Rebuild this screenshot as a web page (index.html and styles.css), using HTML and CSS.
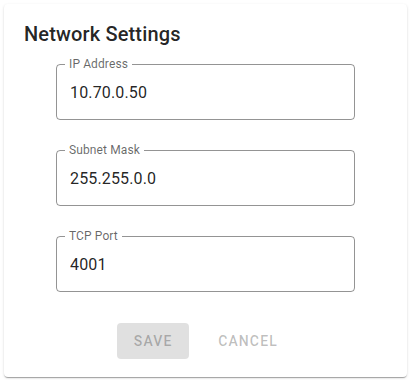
FILE: index.html
```html
<!DOCTYPE html>
<html lang="en">
<head>
  <meta charset="UTF-8" />
  <meta name="viewport" content="width=device-width, initial-scale=1.0" />
  <title>Network Settings</title>
  <link rel="stylesheet" href="styles.css">
</head>
<body>
  <div class="card">
    <h2>Network Settings</h2>

    <form class="settings">
      <div class="field">
        <input type="text" value="10.70.0.50">
        <fieldset><legend>IP Address</legend></fieldset>
      </div>
      <div class="field">
        <input type="text" value="255.255.0.0">
        <fieldset><legend>Subnet Mask</legend></fieldset>
      </div>
      <div class="field">
        <input type="text" value="4001">
        <fieldset><legend>TCP Port</legend></fieldset>
      </div>

      <div class="actions">
        <button type="button" class="save" disabled>Save</button>
        <button type="button" class="cancel" disabled>Cancel</button>
      </div>
    </form>
  </div>
</body>
</html>
```

FILE: styles.css
```css
* {
  box-sizing: border-box;
}

body, html {
  margin: 0;
  padding: 0;
  font-family: Roboto, 'Liberation Sans', sans-serif;
  background: #fff;
}

body {
  padding: 4px;
}

.card {
  width: 403px;
  height: 373px;
  background: #fff;
  border-radius: 4px;
  box-shadow: 0 2px 1px -1px rgba(0,0,0,0.2), 0 1px 1px 0 rgba(0,0,0,0.14), 0 1px 3px 0 rgba(0,0,0,0.12);
  padding: 14px 20px;
}

.card h2 {
  margin: 0;
  font-size: 20px;
  line-height: 32px;
  font-weight: 500;
  color: rgba(0,0,0,0.87);
  letter-spacing: 0.0075em;
}

.settings {
  display: flex;
  flex-direction: column;
  align-items: center;
  gap: 30px;
  margin-top: 14px;
}

.field {
  position: relative;
  width: 299px;
  height: 56px;
}

.field input {
  width: 100%;
  height: 100%;
  border: none;
  outline: none;
  background: transparent;
  padding: 16.5px 14px;
  font-family: inherit;
  font-size: 16px;
  color: rgba(0,0,0,0.87);
  letter-spacing: 0.00938em;
}

.field fieldset {
  position: absolute;
  inset: -5px 0 0 0;
  margin: 0;
  padding: 0 8px;
  border: 1px solid rgba(0,0,0,0.42);
  border-radius: 4px;
  pointer-events: none;
}

.field legend {
  padding: 0 4px;
  font-size: 12px;
  line-height: 11px;
  color: rgba(0,0,0,0.6);
  letter-spacing: 0.00938em;
}

.actions {
  display: flex;
  gap: 21px;
  margin-top: 1px;
  margin-right: 8px;
}

.actions button {
  font-family: inherit;
  font-size: 14px;
  font-weight: 500;
  text-transform: uppercase;
  letter-spacing: 0.08em;
  line-height: 24px;
  border: none;
  border-radius: 4px;
  padding: 6px 16px;
  min-width: 64px;
  color: rgba(0,0,0,0.26);
}

.actions .save {
  width: 72px;
  background: rgba(0,0,0,0.12);
}

.actions .cancel {
  background: transparent;
  padding: 6px 8px;
}
```
